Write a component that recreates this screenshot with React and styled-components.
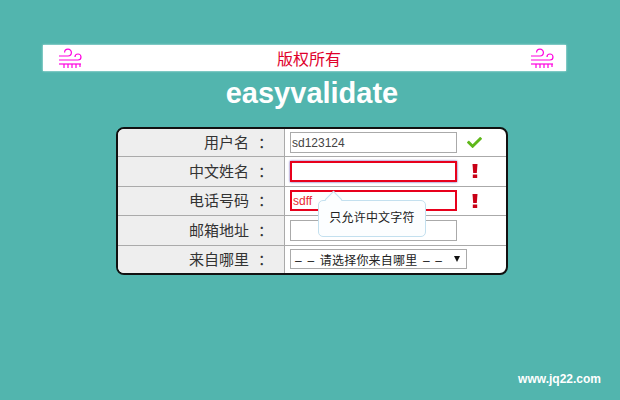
import React from "react";
import styled, { createGlobalStyle } from "styled-components";
import { FaCheck } from "react-icons/fa";

const GlobalStyle = createGlobalStyle`
  html, body {
    margin: 0;
    padding: 0;
    background: #52b5ae;
    font-family: "Liberation Sans", "Noto Sans CJK SC", sans-serif;
  }
`;

const Page = styled.div`
  height: 400px;
  width: 620px;
  box-sizing: border-box;
  padding: 45px 54px 14px 43px;
  display: flex;
  flex-direction: column;
  overflow: hidden;
`;

const Banner = styled.header`
  height: 26px;
  background: #fff;
  box-shadow: 0 0 2px #d8f0ee;
  display: flex;
  align-items: center;
  justify-content: space-between;
  padding: 0 12px 0 15px;
  color: #e0002a;
  font-size: 16px;
`;

const BannerText = styled.span`
  margin-left: 6px;
`;

const Title = styled.h1`
  margin: 3px 0 0 15px;
  height: 38px;
  line-height: 38px;
  text-align: center;
  color: #fff;
  font-size: 29px;
  font-weight: bold;
`;

const Form = styled.form`
  margin: 15px 0 0 73px;
  width: 392px;
  box-sizing: border-box;
  border: 2px solid #111;
  border-radius: 8px;
  background: #fff;
`;

const Row = styled.div`
  display: grid;
  grid-template-columns: 167px 1fr;
  grid-template-rows: minmax(0, 1fr);
  height: 29.5px;
  box-sizing: border-box;
  border-bottom: 1px solid #aaa;
  &:first-child {
    height: 28px;
  }
  &:last-child {
    height: 27px;
    border-bottom: none;
  }
`;

const Label = styled.label`
  display: flex;
  align-items: center;
  justify-content: flex-end;
  min-height: 0;
  background: #eee;
  border-right: 1px solid #aaa;
  padding: 1px 11px 0 0;
  font-size: 15px;
  line-height: 20px;
  color: #333;
  border-radius: ${({ $pos }) =>
    $pos === "top" ? "6px 0 0 0" : $pos === "bottom" ? "0 0 0 6px" : "0"};
`;

const Colon = styled.span`
  margin-left: 9px;
`;

const Field = styled.div`
  position: relative;
  display: flex;
  align-items: center;
  min-height: 0;
  padding-left: 5px;
`;

const Input = styled.input`
  width: 167px;
  height: 21px;
  box-sizing: border-box;
  padding: 0 1px;
  margin: 0;
  font: 12px "Liberation Sans", sans-serif;
  color: ${({ $error }) => ($error ? "#e9282f" : "#444")};
  background: #fff;
  border: ${({ $error }) => ($error ? "2px solid #e8001c" : "1px solid #aaa")};
  outline: none;
  box-shadow: ${({ $focus }) => ($focus ? "0 0 2px #5a3fa8" : "none")};
`;

const Select = styled.div`
  width: 177px;
  height: 20px;
  box-sizing: border-box;
  border: 1px solid #aaa;
  background: #fff;
  display: flex;
  align-items: center;
  justify-content: space-between;
  padding: 0 6px 0 4px;
  font-size: 12px;
  letter-spacing: 0.2px;
  word-spacing: 2px;
  color: #222;
  white-space: pre;
`;

const Arrow = styled.span`
  width: 0;
  height: 0;
  border-left: 3px solid transparent;
  border-right: 3px solid transparent;
  border-top: 6px solid #111;
`;

const StatusIcon = styled.span`
  display: flex;
  align-items: center;
  justify-content: center;
  width: 16px;
  margin-left: ${({ $ok }) => ($ok ? "9px" : "10px")};
  color: ${({ $ok }) => ($ok ? "#5fb81a" : "#c90016")};
  font-size: 15px;
`;

const Tip = styled.div`
  position: absolute;
  left: 33px;
  top: 13px;
  width: 108px;
  height: 37px;
  box-sizing: border-box;
  background: #fcfeff;
  border: 1px solid #c3e0ef;
  border-radius: 5px;
  font-size: 12px;
  letter-spacing: 0.2px;
  line-height: 35px;
  text-align: center;
  color: #222;
  z-index: 2;
  &::before {
    content: "";
    position: absolute;
    left: 8px;
    top: -8px;
    width: 12px;
    height: 12px;
    background: #fcfeff;
    border-left: 1px solid #c3e0ef;
    border-top: 1px solid #c3e0ef;
    transform: rotate(45deg) scale(0.95);
  }
`;

const Footer = styled.footer`
  margin-top: auto;
  margin-right: -35px;
  text-align: right;
  color: #fff;
  font-size: 12px;
  font-weight: bold;
`;

const WindIcon = () => (
  <svg width="24" height="22" viewBox="0 0 24 22" fill="none" stroke="#ff00e0" strokeWidth="1.2">
    <path d="M1 9h9a3.4 3.4 0 1 0-3.4-3.4" />
    <path d="M1 13h19a3 3 0 1 0-3-3" />
    <path d="M1 17h22" />
    <path d="M6 17v4M10 17v4M14 17v4M18 17v4M22 17v3" />
  </svg>
);

const Bang = () => (
  <svg width="6" height="14" viewBox="0 0 6 14" fill="currentColor">
    <path d="M0.5 0h5l-0.7 9h-3.6z" />
    <rect x="0.8" y="10.5" width="4.4" height="3.5" />
  </svg>
);

export default function App() {
  return (
    <>
      <GlobalStyle />
      <Page>
        <Banner>
          <WindIcon />
          <BannerText>版权所有</BannerText>
          <WindIcon />
        </Banner>
        <Title>easyvalidate</Title>
        <Form>
          <Row>
            <Label $pos="top">用户名<Colon>：</Colon></Label>
            <Field>
              <Input defaultValue="sd123124" />
              <StatusIcon $ok><FaCheck /></StatusIcon>
            </Field>
          </Row>
          <Row>
            <Label>中文姓名<Colon>：</Colon></Label>
            <Field>
              <Input $error $focus />
              <StatusIcon><Bang /></StatusIcon>
            </Field>
          </Row>
          <Row>
            <Label>电话号码<Colon>：</Colon></Label>
            <Field>
              <Input $error defaultValue="sdff" />
              <StatusIcon><Bang /></StatusIcon>
              <Tip>只允许中文字符</Tip>
            </Field>
          </Row>
          <Row>
            <Label>邮箱地址<Colon>：</Colon></Label>
            <Field>
              <Input />
            </Field>
          </Row>
          <Row>
            <Label $pos="bottom">来自哪里<Colon>：</Colon></Label>
            <Field>
              <Select>
                <span>– – 请选择你来自哪里 – –</span>
                <Arrow />
              </Select>
            </Field>
          </Row>
        </Form>
        <Footer>www.jq22.com</Footer>
      </Page>
    </>
  );
}
